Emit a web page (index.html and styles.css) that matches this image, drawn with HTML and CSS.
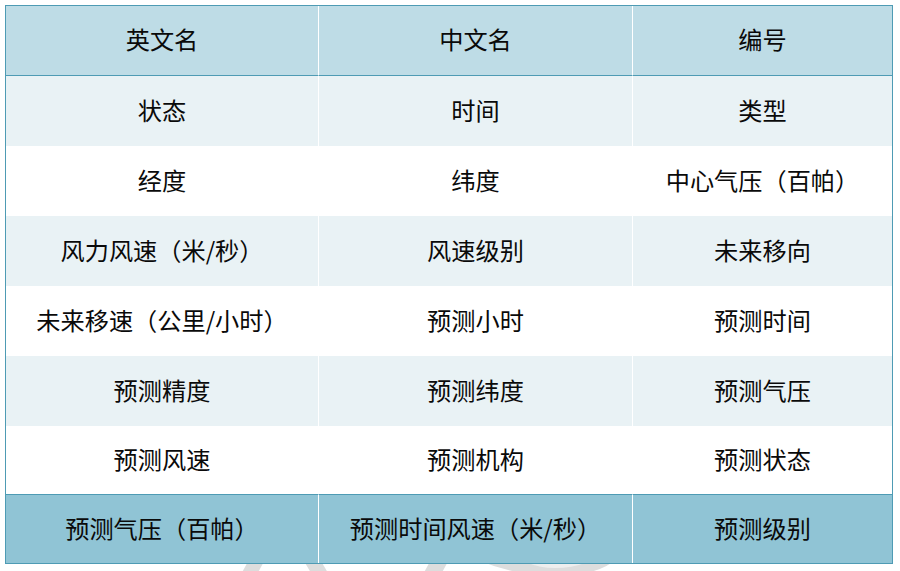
FILE: index.html
```html
<!DOCTYPE html>
<html lang="zh-CN">
<head>
<meta charset="utf-8">
<title>字段对照表</title>
<link rel="stylesheet" href="styles.css">
</head>
<body>
<svg class="watermark" width="900" height="40" viewBox="0 540 900 40" aria-hidden="true">
  <polygon points="251,556 267,556 255,578 239,578" fill="#dddddd"/>
  <polygon points="301,556 318,556 331,578 314,578" fill="#dddddd"/>
  <polygon points="433,556 451,556 439,578 421,578" fill="#dddddd"/>
  <path d="M478 560 L615 560 Q600 574 560 576 Q515 576 478 560 Z" fill="#dddddd"/>
  <path d="M528 563 L585 563 Q572 568 555 568 Q540 568 528 563 Z" fill="#eeeeee"/>
</svg>
<table class="grid">
  <thead>
    <tr class="row-head">
      <th>英文名</th><th>中文名</th><th>编号</th>
    </tr>
  </thead>
  <tbody>
    <tr class="row row-alt"><td>状态</td><td>时间</td><td>类型</td></tr>
    <tr class="row"><td>经度</td><td>纬度</td><td>中心气压（百帕）</td></tr>
    <tr class="row row-alt"><td>风力风速（米/秒）</td><td>风速级别</td><td>未来移向</td></tr>
    <tr class="row"><td>未来移速（公里/小时）</td><td>预测小时</td><td>预测时间</td></tr>
    <tr class="row row-alt"><td>预测精度</td><td>预测纬度</td><td>预测气压</td></tr>
    <tr class="row row-short"><td>预测风速</td><td>预测机构</td><td>预测状态</td></tr>
  </tbody>
  <tfoot>
    <tr class="row-foot"><td>预测气压（百帕）</td><td>预测时间风速（米/秒）</td><td>预测级别</td></tr>
  </tfoot>
</table>
</body>
</html>
```
FILE: styles.css
```css
html, body {
  margin: 0;
  padding: 0;
  background: #ffffff;
}
body {
  padding: 5px;
  position: relative;
  width: 900px;
  height: 571px;
  box-sizing: border-box;
  overflow: hidden;
  font-family: "Noto Sans CJK SC", "Noto Sans", sans-serif;
}
.watermark {
  position: absolute;
  left: 0;
  top: 540px;
  z-index: 0;
}
.grid {
  position: relative;
  z-index: 1;
  width: 888px;
  border: 1px solid #4e9bb4;
  border-collapse: separate;
  border-spacing: 0;
  table-layout: fixed;
  color: #0a0a0a;
  font-size: 24.2px;
}
.grid th, .grid td {
  padding: 0 0 2px 0;
  text-align: center;
  vertical-align: middle;
  font-weight: normal;
  line-height: 1;
  border-left: 1px solid #ffffff;
}
.grid th:first-child, .grid td:first-child {
  border-left: none;
  width: 312px;
}
.grid th:nth-child(2), .grid td:nth-child(2) {
  width: 313px;
}
.row-head th {
  height: 67px;
  background: #bedce6;
  border-bottom: 1px solid #4e9bb4;
}
.row td {
  height: 68px;
  background: #ffffff;
}
.row-alt td {
  background: #e9f2f5;
}
.row-short td {
  height: 66px;
}
.row-foot td {
  height: 66px;
  background: #90c4d5;
  border-top: 1px solid #4e9bb4;
}
```
